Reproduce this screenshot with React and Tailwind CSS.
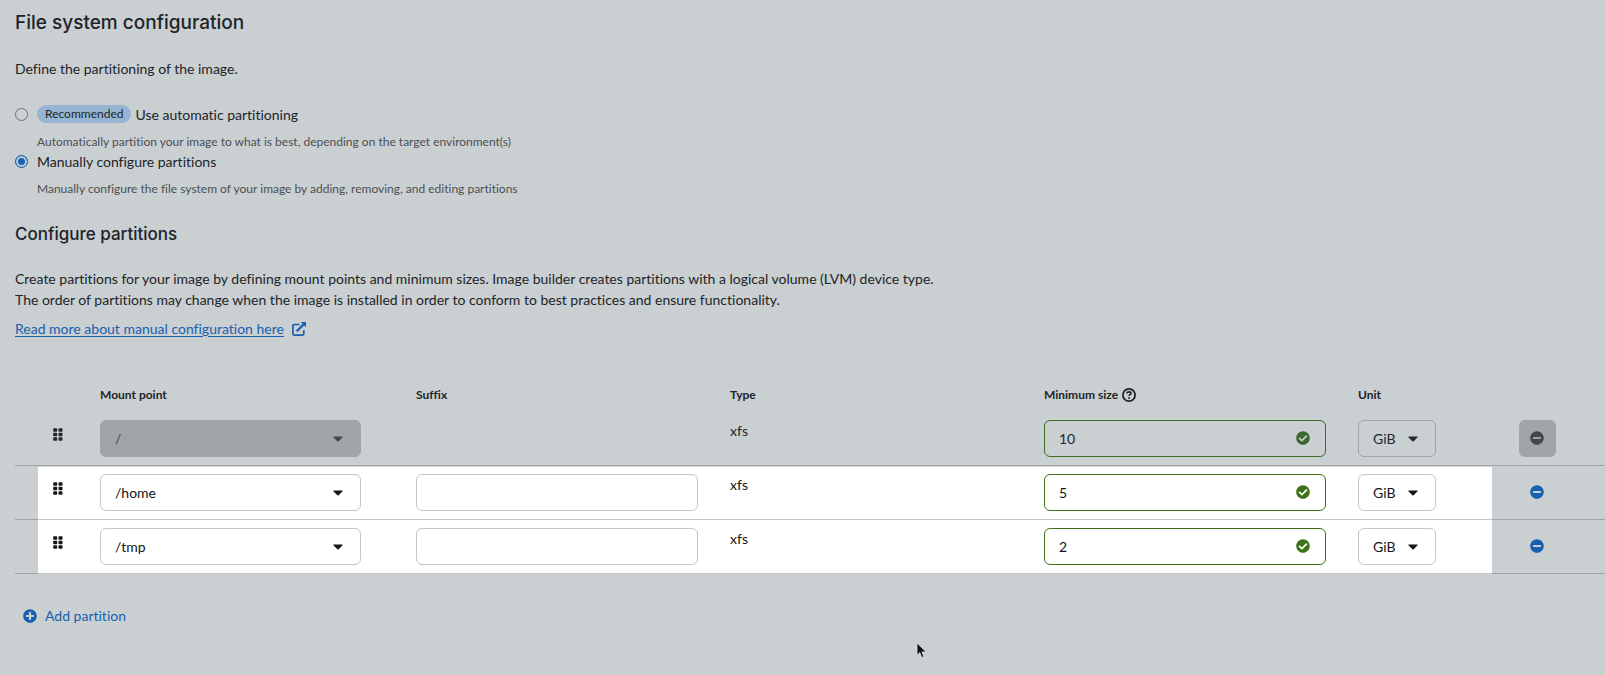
import React from "react";

const PARTITIONS = [
  { id: "root", mount: "/", size: "10", locked: true },
  { id: "home", mount: "/home", size: "5", locked: false, first: true },
  { id: "tmp", mount: "/tmp", size: "2", locked: false },
];

function Caret({ className }) {
  return (
    <svg viewBox="0 0 10 6" aria-hidden="true" className={`pointer-events-none absolute h-[6px] w-[10px] ${className}`}>
      <path d="M1 0.5h8c.6 0 .8.6.4 1L5.6 5.2a.9.9 0 0 1-1.2 0L.6 1.500c-.4-.4-.2-1 .4-1z" fill="currentColor" />
    </svg>
  );
}

function Grip() {
  return (
    <svg viewBox="0 0 10 13" aria-hidden="true" className="h-[13px] w-[10px]" fill="currentColor">
      {[0.2, 4.7, 9.2].map((y) => (
        <g key={y}>
          <rect x="0.2" y={y} width="4" height="3.500" rx="0.800" />
          <rect x="5.500" y={y} width="4" height="3.500" rx="0.800" />
        </g>
      ))}
    </svg>
  );
}

function MinusCircle() {
  return (
    <svg viewBox="0 0 512 512" aria-hidden="true" className="size-[14px]" fill="currentColor">
      <path d="M256 8C119 8 8 119 8 256s111 248 248 248 248-111 248-248S393 8 256 8zM124 296c-6.600 0-12-5.400-12-12v-56c0-6.600 5.400-12 12-12h264c6.600 0 12 5.400 12 12v56c0 6.600-5.400 12-12 12H124z" />
    </svg>
  );
}

function PlusCircle() {
  return (
    <svg viewBox="0 0 512 512" aria-hidden="true" className="size-[14px]" fill="currentColor">
      <path d="M256 8C119 8 8 119 8 256s111 248 248 248 248-111 248-248S393 8 256 8zm144 276c0 6.600-5.400 12-12 12h-92v92c0 6.600-5.400 12-12 12h-56c-6.600 0-12-5.400-12-12v-92h-92c-6.600 0-12-5.400-12-12v-56c0-6.600 5.400-12 12-12h92v-92c0-6.600 5.400-12 12-12h56c6.600 0 12 5.400 12 12v92h92c6.600 0 12 5.400 12 12v56z" />
    </svg>
  );
}

function CheckCircle({ className }) {
  return (
    <svg viewBox="0 0 512 512" aria-hidden="true" className={`pointer-events-none absolute size-[14px] ${className}`} fill="currentColor">
      <path d="M504 256c0 136.967-111.033 248-248 248S8 392.967 8 256 119.033 8 256 8s248 111.033 248 248zM227.314 387.314l184-184c6.248-6.248 6.248-16.379 0-22.627l-22.627-22.627c-6.248-6.249-16.379-6.249-22.628 0L216 308.118l-70.059-70.059c-6.248-6.248-16.379-6.248-22.628 0l-22.627 22.627c-6.248 6.248-6.248 16.379 0 22.627l104 104c6.249 6.249 16.379 6.249 22.628.001z" />
    </svg>
  );
}

function HelpCircle() {
  return (
    <svg viewBox="0 0 14 14" aria-hidden="true" className="size-[14px]" fill="none" stroke="currentColor">
      <circle cx="7" cy="7" r="6.100" strokeWidth="1.800" />
      <path d="M4.900 5.500c.2-1.200 1-1.700 2.100-1.700 1.200 0 2 .6 2 1.600 0 1.300-1.900 1.200-1.900 2.600" strokeWidth="1.700" />
      <circle cx="7.100" cy="10" r="1" fill="currentColor" stroke="none" />
    </svg>
  );
}

function ExternalLink() {
  return (
    <svg viewBox="0 0 14 14" aria-hidden="true" className="size-[14px]" fill="none" stroke="currentColor">
      <path d="M7.500 2.500H2.200C1.400 2.500.9 3 .9 3.700v8.100c0 .8.500 1.300 1.300 1.300h8.300c.8 0 1.300-.5 1.300-1.300V8.200" strokeWidth="1.700" />
      <path d="M4.700 9.300 11.500 2.500" strokeWidth="2.300" />
      <path d="M8.700 0H14v5.300z" fill="currentColor" stroke="none" />
    </svg>
  );
}

function Pointer() {
  return (
    <svg viewBox="0 0 12 18" aria-hidden="true" className="pointer-events-none absolute left-[916px] top-[642px] h-[18px] w-[12px]">
      <path d="M1 1v12.200l2.800-2.600 2 4.900 2.100-.9-2-4.700h4.300z" fill="#0b1114" stroke="#dde0e1" strokeWidth="0.800" />
    </svg>
  );
}

function PartitionRow({ mount, size, locked, first }) {
  const line = locked ? "border-[#9fa4a6]" : "border-[#c4c6c7]";
  const lit = locked ? "" : first ? "bg-white shadow-[inset_0_1px_0_#cacfd2]" : "bg-white";
  const cell = `border-b px-4 py-2 align-top ${line} ${lit}`;
  const edge = "border-b border-[#9fa4a6]";
  const text = locked ? "text-[#22282b]" : "text-[#151515]";
  return (
    <tr className={text}>
      <td className={edge} />
      <td className={`border-b py-2 align-top ${line} ${lit}`}>
        <button type="button" aria-label={`Drag ${mount}`} className="ml-[15px] flex h-[29px] items-center">
          <Grip />
        </button>
      </td>
      <td className={`border-b py-2 pl-[14px] pr-[39px] align-top ${line} ${lit}`}>
        <div className="relative">
          <select
            aria-label="Mount point"
            disabled={locked}
            defaultValue={mount}
            className={`block h-[37px] w-full appearance-none rounded-md px-[14px] opacity-100 ${
              locked ? "border border-[#a0a5a7] bg-[#a0a5a7] text-[#42484b]" : "border border-[#c4c6c7] bg-white"
            }`}
          >
            <option>{mount}</option>
          </select>
          <Caret className={`right-[18px] top-[16px] ${locked ? "text-[#42484b]" : ""}`} />
        </div>
      </td>
      <td className={cell}>
        {!locked && (
          <input
            type="text"
            aria-label="Suffix"
            className="block h-[37px] w-full rounded-md border border-[#c4c6c7] bg-white px-[14px]"
          />
        )}
      </td>
      <td className={cell}>xfs</td>
      <td className={cell}>
        <div className="relative">
          <input
            type="text"
            aria-label="Minimum size"
            defaultValue={size}
            className={`block h-[37px] w-full rounded-md border bg-transparent pl-[14px] pr-10 ${
              locked ? "border-[#3c6c28]" : "border-[#3d7317]"
            }`}
          />
          <CheckCircle className={`right-[16px] top-[11px] ${locked ? "text-[#3c6730]" : "text-[#3d7317]"}`} />
        </div>
      </td>
      <td className={cell}>
        <div className="relative w-[78px]">
          <select
            aria-label="Unit"
            className={`block h-[37px] w-full appearance-none rounded-md border bg-transparent pl-[14px] ${
              locked ? "border-[#9fa4a6]" : "border-[#c4c6c7]"
            }`}
          >
            <option>GiB</option>
          </select>
          <Caret className="right-[18px] top-[16px]" />
        </div>
      </td>
      <td className={`${edge} py-2 pl-[27px] align-top`}>
        <button
          type="button"
          aria-label={`Remove ${mount}`}
          disabled={locked}
          className={`block size-[37px] rounded-md ${
            locked ? "bg-[#a0a5a7] text-[#42484b]" : "text-[#175fb0]"
          }`}
        >
          <span className="flex h-full items-start pl-[11px] pt-[11px]">
            <MinusCircle />
          </span>
        </button>
      </td>
    </tr>
  );
}

function RadioOption({ id, checked, badge, label, description }) {
  return (
    <div className="grid grid-cols-[13px_1fr] gap-x-[9px]">
      <span className="flex h-[21px] items-center">
        <input
          type="radio"
          name="partitioning"
          id={id}
          defaultChecked={checked}
          className="size-[13px] appearance-none rounded-full border border-[#6b7073] bg-[#cdd1d3] checked:border-[#175fb0] checked:bg-[#175fb0] checked:shadow-[inset_0_0_0_2px_#cacfd2]"
        />
      </span>
      <label htmlFor={id} className="flex h-[20px] items-center gap-1">
        {badge && (
          <span className="rounded-full bg-[#97b5d3] px-2 text-xs leading-[18px]">{badge}</span>
        )}
        {label}
      </label>
      <p className="col-start-2 mt-2 text-xs leading-[18px] text-[#4a5053]">{description}</p>
    </div>
  );
}

export default function App() {
  return (
    <main className="relative min-h-screen bg-[#cacfd2] pb-6 pl-[15px] pt-[10px] font-[Lato,sans-serif] text-sm leading-[21px] text-[#1d2427] [font-variant-ligatures:none]">
      <h1 className="font-[Inter,sans-serif] text-[19px] font-medium leading-[26px]">File system configuration</h1>
      <p className="mt-[22px]">Define the partitioning of the image.</p>

      <div className="mt-[25px]">
        <RadioOption
          id="automatic"
          badge="Recommended"
          label="Use automatic partitioning"
          description="Automatically partition your image to what is best, depending on the target environment(s)"
        />
        <RadioOption
          id="manual"
          checked
          label="Manually configure partitions"
          description="Manually configure the file system of your image by adding, removing, and editing partitions"
        />
      </div>

      <h2 className="mt-[23px] font-[Inter,sans-serif] text-[17px] font-medium leading-[26px]">Configure partitions</h2>
      <p className="mt-[21px]">
        Create partitions for your image by defining mount points and minimum sizes. Image builder creates partitions with a logical volume (LVM) device type.
        <br />
        The order of partitions may change when the image is installed in order to conform to best practices and ensure functionality.
      </p>
      <a href="#manual-configuration" className="mt-2 flex w-fit items-center gap-2 text-[#175fb0]">
        <span className="underline underline-offset-2">Read more about manual configuration here</span>
        <ExternalLink />
      </a>

      <table className="mt-[39px] w-full table-fixed border-separate border-spacing-0 text-left">
        <colgroup>
          <col className="w-[23px]" />
          <col className="w-[48px]" />
          <col />
          <col />
          <col />
          <col />
          <col className="w-[150px]" />
          <col className="w-[113px]" />
        </colgroup>
        <thead>
          <tr className="h-[34px] text-xs leading-[18px]">
            <td />
            <td />
            <th className="pl-[14px] font-bold">Mount point</th>
            <th className="px-4 font-bold">Suffix</th>
            <th className="px-4 font-bold">Type</th>
            <th className="px-4 font-bold">
              <span className="flex items-center gap-1">
                Minimum size
                <button type="button" aria-label="About minimum size">
                  <HelpCircle />
                </button>
              </span>
            </th>
            <th className="px-4 font-bold">Unit</th>
            <td />
          </tr>
        </thead>
        <tbody>
          {PARTITIONS.map((p) => (
            <PartitionRow key={p.id} mount={p.mount} size={p.size} locked={p.locked} first={p.first} />
          ))}
        </tbody>
      </table>

      <button type="button" className="ml-2 mt-[31px] flex items-center gap-2 text-[#175fb0]">
        <PlusCircle />
        Add partition
      </button>

      <Pointer />
    </main>
  );
}
